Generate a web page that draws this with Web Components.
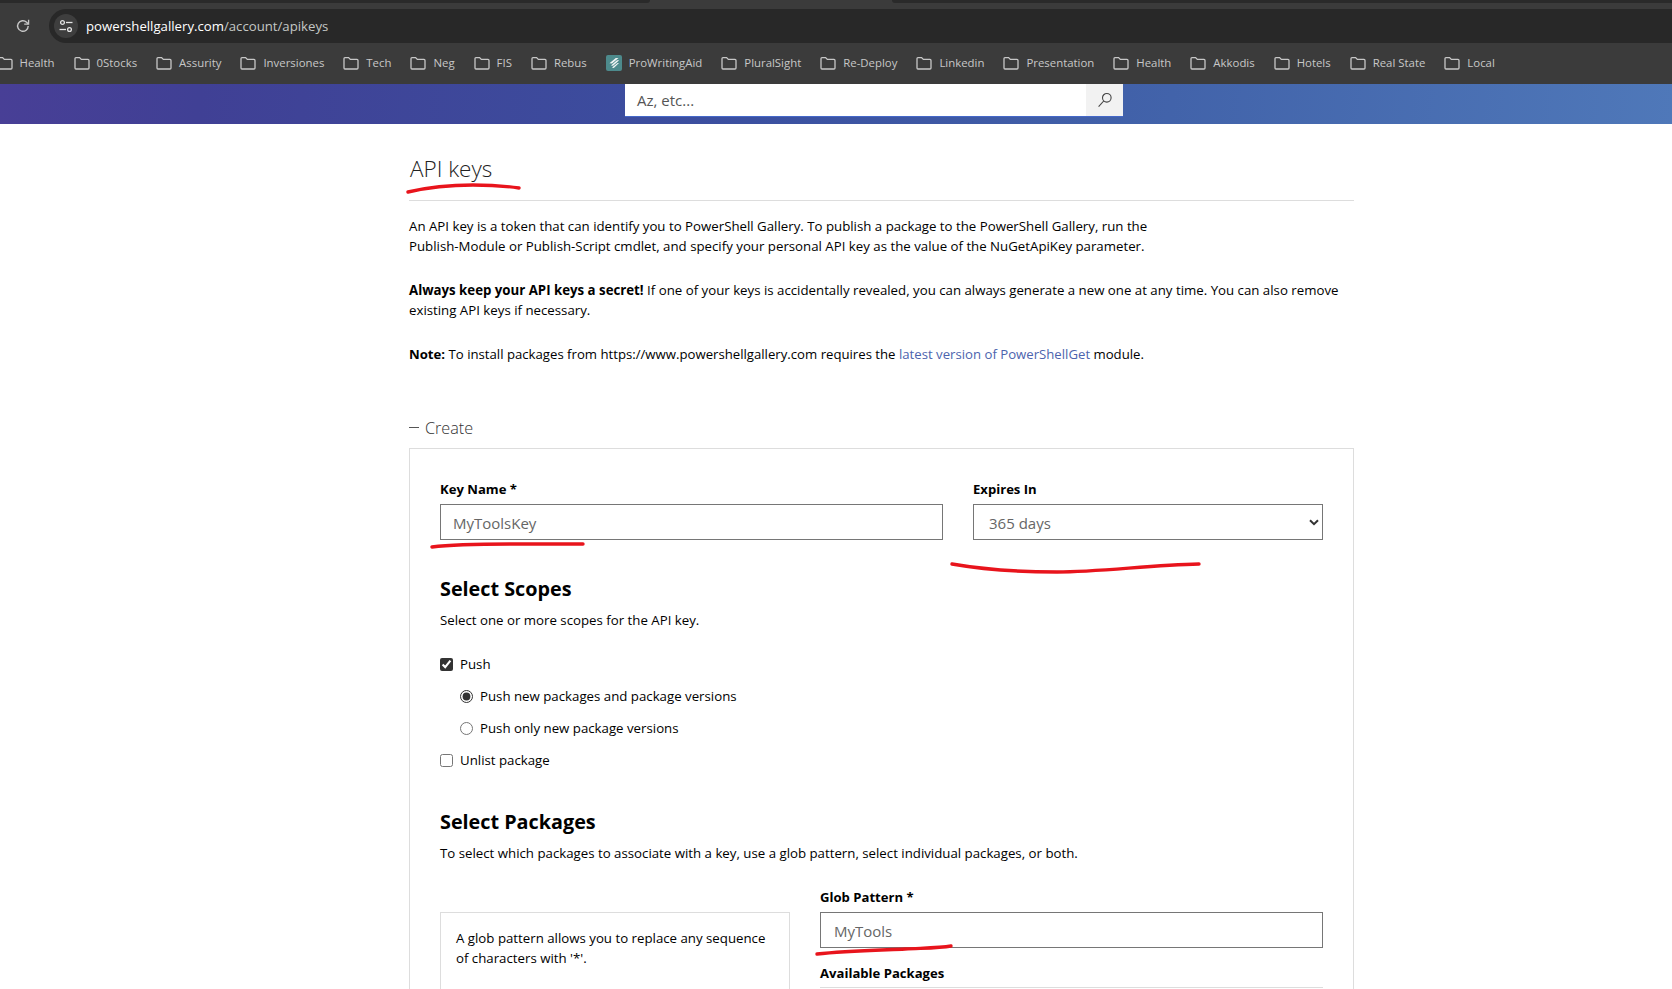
<!DOCTYPE html>
<html lang="en">
<head>
<meta charset="utf-8">
<title>API keys</title>
<style>
    html, body { margin: 0; height: 989px; overflow: hidden; background: #fff; }
    body { font-family: "Open Sans", "Noto Sans", sans-serif; font-size: 13.26px; color: #000; }
</style>
</head>
<body>
<browser-toolbar url-host="powershellgallery.com" url-path="/account/apikeys"></browser-toolbar>
<bookmark-bar>
    <bookmark-item>Health</bookmark-item>
    <bookmark-item>0Stocks</bookmark-item>
    <bookmark-item>Assurity</bookmark-item>
    <bookmark-item>Inversiones</bookmark-item>
    <bookmark-item>Tech</bookmark-item>
    <bookmark-item>Neg</bookmark-item>
    <bookmark-item>FIS</bookmark-item>
    <bookmark-item>Rebus</bookmark-item>
    <bookmark-item icon="pwa">ProWritingAid</bookmark-item>
    <bookmark-item>PluralSight</bookmark-item>
    <bookmark-item>Re-Deploy</bookmark-item>
    <bookmark-item>Linkedin</bookmark-item>
    <bookmark-item>Presentation</bookmark-item>
    <bookmark-item>Health</bookmark-item>
    <bookmark-item>Akkodis</bookmark-item>
    <bookmark-item>Hotels</bookmark-item>
    <bookmark-item>Real State</bookmark-item>
    <bookmark-item>Local</bookmark-item>
</bookmark-bar>
<site-hero><search-box placeholder="Az, etc..."></search-box></site-hero>
<api-keys-page></api-keys-page>
<ink-marks></ink-marks>

<script>
// top of the browser window: tab strip leftovers and the address pill
class BrowserToolbar extends HTMLElement {
    constructor() {
        super()
        this.attachShadow({ mode: 'open' })
        this.shadowRoot.innerHTML = `
            <style>
                :host { display: block; background: #3b3b3b; height: 43px; overflow: hidden; }
                .tabs { display: flex; justify-content: space-between; height: 9px; }
                .tabs i { display: block; height: 3px; background: #2a2a2a; }
                .tabs i:first-child { width: 650px; border-bottom-right-radius: 6px; }
                .tabs i:last-child { width: 780px; border-bottom-left-radius: 6px; }
                .row { display: flex; align-items: stretch; height: 34px; }
                .reload { width: 45px; margin-right: 4px; display: flex; align-items: center; justify-content: center; }
                .pill { flex: 1; display: flex; align-items: center; gap: 8px; background: #282828; border-radius: 17px 0 0 17px; padding-left: 5px; }
                .tune { width: 24px; height: 24px; border-radius: 50%; background: #3e3e3e; display: flex; align-items: center; justify-content: center; }
                .url { font-size: 13.2px; color: #fff; }
                .url span { color: #c4c7c5; }
            </style>
            <div class="tabs"><i></i><i></i></div>
            <div class="row">
                <div class="reload">
                    <svg width="16" height="16" viewBox="0 0 16 16" fill="none" stroke="#c7c7c7" stroke-width="1.4">
                        <path d="M13.2 8a5.3 5.3 0 1 1-1.6-3.8L13.4 6"/>
                        <path d="M13.6 1.8v4.4H9.2" stroke-width="1.3"/>
                    </svg>
                </div>
                <div class="pill">
                    <div class="tune">
                        <svg width="16" height="16" viewBox="0 0 16 16" fill="none" stroke="#e3e3e3" stroke-width="1.3">
                            <circle cx="4.5" cy="4.5" r="1.9"/><path d="M8 4.5h6.5"/>
                            <circle cx="11.5" cy="11.5" r="1.9"/><path d="M1.5 11.5H8"/>
                        </svg>
                    </div>
                    <div class="url">${this.getAttribute('url-host')}<span>${this.getAttribute('url-path')}</span></div>
                </div>
            </div>
        `
    }
}

class BookmarkBar extends HTMLElement {
    constructor() {
        super()
        this.attachShadow({ mode: 'open' })
        this.shadowRoot.innerHTML = `
            <style>
                :host { box-sizing: border-box; display: flex; align-items: center; gap: 19px; height: 41px; background: #3b3b3b; padding: 0 0 2px 0; margin-left: -3.5px; overflow: hidden; }
            </style>
            <slot></slot>
        `
    }
}

class BookmarkItem extends HTMLElement {
    constructor() {
        super()
        this.attachShadow({ mode: 'open' })
        const folder = `<svg width="16" height="16" viewBox="0 0 16 16" fill="none" stroke="#c7c7c7" stroke-width="1.3">
            <path d="M1 3.6c0-.6.4-1 1-1h3.6l1.7 1.8H14c.6 0 1 .4 1 1V13c0 .6-.4 1-1 1H2c-.6 0-1-.4-1-1z"/></svg>`
        const pwa = `<svg width="16" height="16" viewBox="0 0 16 16">
            <rect width="16" height="16" rx="2" fill="#4d8a8c"/>
            <path d="M3.5 8.2 9.8 3h2.7L6 8.6zM5 10.4 11 5.2h2.2L7 10.8zM6 12.6 11.6 8H13l-5.2 5z" fill="#f2f5f5"/></svg>`
        this.shadowRoot.innerHTML = `
            <style>
                :host { display: flex; align-items: center; gap: 7px; flex: none; font-size: 11.4px; color: #c7c7c7; }
            </style>
            ${this.getAttribute('icon') === 'pwa' ? pwa : folder}
            <slot></slot>
        `
    }
}

class SiteHero extends HTMLElement {
    constructor() {
        super()
        this.attachShadow({ mode: 'open' })
        this.shadowRoot.innerHTML = `
            <style>
                :host { display: block; height: 40px; background: linear-gradient(95deg, #483f96 0%, #404095 12%, #3b50a0 45%, #4263aa 70%, #4f78b9 100%); padding-left: 625px; }
            </style>
            <slot></slot>
        `
    }
}

class SearchBox extends HTMLElement {
    constructor() {
        super()
        this.attachShadow({ mode: 'open' })
        this.shadowRoot.innerHTML = `
            <style>
                :host { display: flex; width: 498px; height: 32px; background: #fff; box-shadow: 0 1px 0 #4568c8; }
                .text { flex: 1; padding-left: 12px; font-size: 15px; line-height: 32px; color: #555; }
                .btn { width: 37px; background: #f2f2f2; display: flex; align-items: center; justify-content: center; }
            </style>
            <div class="text">${this.getAttribute('placeholder')}</div>
            <div class="btn">
                <svg width="16" height="16" viewBox="0 0 16 16" fill="none" stroke="#444" stroke-width="1.1">
                    <circle cx="9.8" cy="5.8" r="4.3"/><path d="M6.7 9 1.6 14.6"/>
                </svg>
            </div>
        `
    }
}

class FormField extends HTMLElement {
    constructor() {
        super()
        this.attachShadow({ mode: 'open' })
        const chevron = `<svg width="10" height="7" viewBox="0 0 10 7" fill="none" stroke="#333" stroke-width="2"><path d="M1 1.2 5 5.2 9 1.2"/></svg>`
        this.shadowRoot.innerHTML = `
            <style>
                :host { display: block; }
                label { display: block; font-size: 13.1px; font-weight: 700; line-height: 20px; margin-bottom: 5px; }
                .box { box-sizing: border-box; height: 36px; border: 1px solid #767676; display: flex; align-items: center; justify-content: space-between; color: #666; font-size: 15px; padding-left: var(--pad, 12px); padding-right: 3px; padding-top: 1px; }
            </style>
            <label>${this.getAttribute('label')}</label>
            <div class="box"><slot></slot>${this.hasAttribute('select') ? chevron : ''}</div>
        `
    }
}

class OptionRow extends HTMLElement {
    constructor() {
        super()
        this.attachShadow({ mode: 'open' })
        const type = this.getAttribute('type') || 'checkbox'
        this.shadowRoot.innerHTML = `
            <style>
                :host { display: flex; align-items: center; gap: 7px; height: 32px; }
                :host([indent]) { padding-left: 20px; }
                input { appearance: auto; accent-color: #333; width: 13px; height: 13px; margin: 0; }
            </style>
            <input type="${type}" ${this.hasAttribute('checked') ? 'checked' : ''} tabindex="-1">
            <slot></slot>
        `
    }
}

class ApiKeysPage extends HTMLElement {
    constructor() {
        super()
        this.attachShadow({ mode: 'open' })
        this.shadowRoot.innerHTML = `
            <style>
                :host { display: block; width: 945px; margin-left: 409px; line-height: 20px; }
                h1 { font-size: 22.5px; font-weight: 300; line-height: 34px; margin: 28px 0 0; padding-bottom: 14px; border-bottom: 1px solid #ddd; color: #222; text-indent: 1px; }
                p { margin: 0; }
                .intro { margin-top: 15px; }
                .intro p + p { margin-top: 24px; }
                .intro .note { font-size: 13.18px; }
                a { color: #4c64ae; text-decoration: none; }
                .legend { display: flex; align-items: center; gap: 6px; margin: 52px 0 8px; font-size: 16.2px; font-weight: 300; line-height: 24px; color: #333; }
                .legend i { display: block; width: 10px; height: 1px; background: #555; margin-top: -2px; }
                .card { border: 1px solid #ddd; border-bottom: 0; padding: 30px 30px 0; }
                .top { display: grid; grid-template-columns: 503px 350px; column-gap: 30px; }
                h2 { font-size: 19.8px; font-weight: 700; line-height: 28px; margin: 35px 0 7px; }
                .opts { margin-top: 18px; }
                .opts + h2 { margin-top: 32px; }
                .pkg { display: grid; grid-template-columns: 350px 503px; column-gap: 30px; margin-top: 24px; }
                .glob { box-sizing: border-box; margin-top: 25px; border: 1px solid #ddd; border-bottom: 0; padding: 15px 15px 0; height: 77px; }
                .avail { font-weight: 700; font-size: 13.1px; margin-top: 15px; margin-bottom: 4px; }
                .list { border-top: 1px solid #ddd; }
            </style>
            <h1>API keys</h1>
            <div class="intro">
                <p>An API key is a token that can identify you to PowerShell Gallery. To publish a package to the PowerShell Gallery, run the<br>Publish-Module or Publish-Script cmdlet, and specify your personal API key as the value of the NuGetApiKey parameter.</p>
                <p><b>Always keep your API keys a secret!</b> If one of your keys is accidentally revealed, you can always generate a new one at any time. You can also remove<br>existing API keys if necessary.</p>
                <p class="note"><b>Note:</b> To install packages from https://www.powershellgallery.com requires the <a href="#">latest version of PowerShellGet</a> module.</p>
            </div>
            <div class="legend"><i></i>Create</div>
            <div class="card">
                <div class="top">
                    <form-field label="Key Name *">MyToolsKey</form-field>
                    <form-field label="Expires In" select style="--pad:15px">365 days</form-field>
                </div>
                <h2>Select Scopes</h2>
                <p>Select one or more scopes for the API key.</p>
                <div class="opts">
                    <option-row checked>Push</option-row>
                    <option-row type="radio" indent checked>Push new packages and package versions</option-row>
                    <option-row type="radio" indent>Push only new package versions</option-row>
                    <option-row>Unlist package</option-row>
                </div>
                <h2>Select Packages</h2>
                <p>To select which packages to associate with a key, use a glob pattern, select individual packages, or both.</p>
                <div class="pkg">
                    <div class="glob">A glob pattern allows you to replace any sequence of characters with '*'.</div>
                    <div>
                        <form-field label="Glob Pattern *" style="--pad:13px">MyTools</form-field>
                        <div class="avail">Available Packages</div>
                        <div class="list"></div>
                    </div>
                </div>
            </div>
        `
    }
}

// red pen strokes someone drew over the screenshot
class InkMarks extends HTMLElement {
    constructor() {
        super()
        this.attachShadow({ mode: 'open' })
        this.shadowRoot.innerHTML = `
            <style>
                :host { position: absolute; left: 0; top: 0; width: 1672px; height: 989px; pointer-events: none; }
                svg { display: block; }
                path { fill: none; stroke: #e8141c; stroke-width: 3.4; stroke-linecap: round; stroke-linejoin: round; }
            </style>
            <svg width="1672" height="989">
                <path d="M408 192C425 188 445 185 473 185C490 185 505 186 519 188"/>
                <path d="M432 547C455 544 480 544 510 544C535 544 560 544 583 544"/>
                <path d="M952 564C975 568 1010 572 1057 572C1100 572 1150 565 1199 564"/>
                <path d="M817 954C845 951 885 950 905 949C925 948 940 948 951 946"/>
            </svg>
        `
    }
}

customElements.define('browser-toolbar', BrowserToolbar)
customElements.define('bookmark-bar', BookmarkBar)
customElements.define('bookmark-item', BookmarkItem)
customElements.define('site-hero', SiteHero)
customElements.define('search-box', SearchBox)
customElements.define('form-field', FormField)
customElements.define('option-row', OptionRow)
customElements.define('api-keys-page', ApiKeysPage)
customElements.define('ink-marks', InkMarks)
</script>
</body>
</html>
